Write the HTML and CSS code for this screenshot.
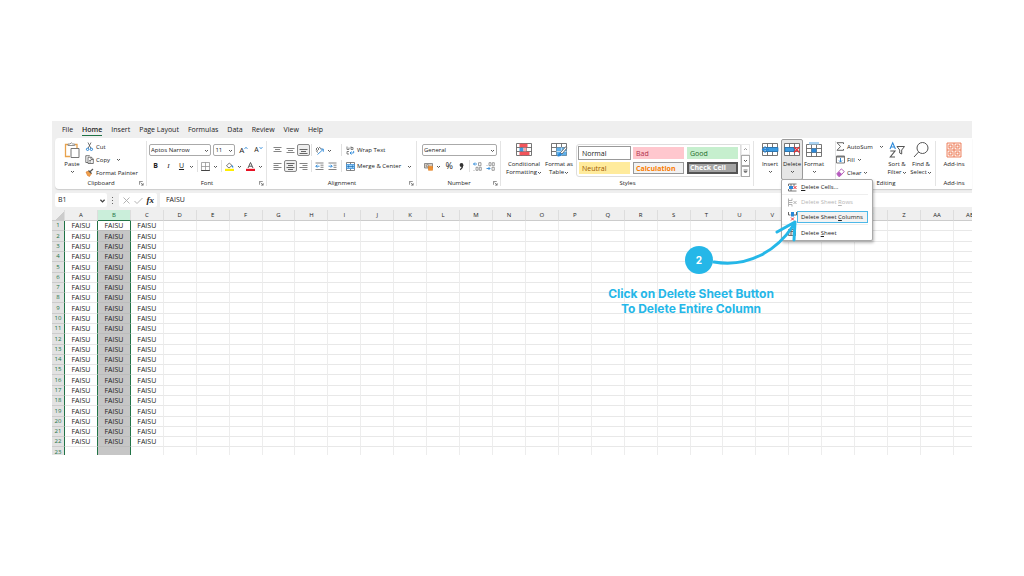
FILE: index.html
```html
<!DOCTYPE html>
<html lang="en">
<head>
<meta charset="utf-8">
<title>Delete sheet columns</title>
<link rel="stylesheet" href="styles.css">
</head>
<body>
<svg class="defs" aria-hidden="true">
  <symbol id="chev" viewBox="0 0 5 5"><path d="M1 2l1.500 1.500L4 2" fill="none" stroke="#444" stroke-width=".9"/></symbol>
  <symbol id="launch" viewBox="0 0 6 6"><path d="M.5 4.500V.5H4.500M2 2l3 3M5 2.500V5H2.500" fill="none" stroke="#555" stroke-width=".8"/></symbol>
  <symbol id="grid" viewBox="0 0 16 14"><path d="M.5.5h15v12H.5zM.5 4.500h15M.5 8.500h15M5.500.5v12M10.500.5v12" fill="#fff" stroke="#666" stroke-width=".9"/></symbol>
</svg>
<main class="app">
  <nav class="tabs">
    <button class="tab">File</button><button class="tab current">Home</button><button class="tab">Insert</button><button class="tab">Page Layout</button><button class="tab">Formulas</button><button class="tab">Data</button><button class="tab">Review</button><button class="tab">View</button><button class="tab">Help</button>
  </nav>

  <div class="ribbon">
    <section class="group">
      <div class="body clip">
        <button class="big"><svg class="i16" viewBox="0 0 16 16"><path d="M4 2.500H1.500v12H6M11 2.500h2V6" fill="none" stroke="#e8a24c" stroke-width="1.300"/><path d="M4 3.500V2h2Q7.200-.5 8.700 2h2v1.500z" fill="#fff" stroke="#777" stroke-width=".8"/><path d="M7 6.500h8v9H7z" fill="#fff" stroke="#777"/></svg><span>Paste</span><svg class="chev"><use href="#chev"/></svg></button>
        <div class="stack">
          <button class="line"><svg class="i9" viewBox="0 0 9 9"><path d="M3 .5l3 6M6 .5L3 6.500" fill="none" stroke="#555" stroke-width=".8"/><circle cx="2.600" cy="7.300" r="1.200" fill="none" stroke="#2b88d8"/><circle cx="6.400" cy="7.300" r="1.200" fill="none" stroke="#2b88d8"/></svg>Cut</button>
          <button class="line"><svg class="i9" viewBox="0 0 9 9"><path d="M3 7.500H.8V.7h4M3 2.200h3.500L8.300 4v4.500H3zM6 2.200V4.500h2.300M4.200 5.500h2M4.200 7h2" fill="none" stroke="#555" stroke-width=".8"/></svg>Copy<svg class="chev far"><use href="#chev"/></svg></button>
          <button class="line"><svg class="i9" viewBox="0 0 9 9"><path d="M1 4l3-1 2.500 2.500L4.500 8.500 2.500 7.500z" fill="#f1a04b" stroke="#d9772a" stroke-width=".6"/><path d="M3.500 2.500l3 3M5 3.800L8 1" fill="none" stroke="#555" stroke-width="1.200"/></svg>Format Painter</button>
        </div>
      </div>
      <div class="label">Clipboard<svg class="launch"><use href="#launch"/></svg></div>
    </section>

    <section class="group">
      <div class="body rows">
        <div class="row fontrow">
          <select class="combo wide" aria-label="Font"><option>Aptos Narrow</option></select>
          <select class="combo small" aria-label="Font size"><option>11</option></select>
          <button class="tool grow" aria-label="Increase font size">A<svg class="tiny" viewBox="0 0 4 4"><path d="M.5 3L2 1.200 3.500 3" fill="none" stroke="#2b88d8" stroke-width=".8"/></svg></button>
          <button class="tool shrink" aria-label="Decrease font size">A<svg class="tiny" viewBox="0 0 4 4"><path d="M.5 1L2 2.800 3.500 1" fill="none" stroke="#2b88d8" stroke-width=".8"/></svg></button>
        </div>
        <div class="row">
          <button class="tool bold">B</button><button class="tool ital">I</button><button class="tool under">U</button><svg class="chev"><use href="#chev"/></svg><i class="sep"></i>
          <button class="tool" aria-label="Borders"><svg class="i9" viewBox="0 0 9 9"><path d="M.5 .5h8v8h-8zM4.500.5v8M.5 4.500h8" fill="none" stroke="#888" stroke-width=".7"/><path d="M.2 8.500h8.600" stroke="#444"/></svg></button><svg class="chev"><use href="#chev"/></svg><i class="sep"></i>
          <button class="tool" aria-label="Fill color"><svg class="i9" viewBox="0 0 9 9"><path d="M1.500 3.800L4.300 1 7 3.500 4 6z" fill="#fff" stroke="#555" stroke-width=".8"/><path d="M7 3.500l1 2" stroke="#2b88d8" stroke-width="1.200"/><path d="M0 6.800h9V9H0z" fill="#ffee00"/></svg></button><svg class="chev"><use href="#chev"/></svg>
          <button class="tool" aria-label="Font color"><svg class="i9" viewBox="0 0 9 9"><path d="M2 6L4.500.5 7 6M3 4.200h3" fill="none" stroke="#444" stroke-width=".9"/><path d="M0 6.800h9V9H0z" fill="#e81123"/></svg></button><svg class="chev"><use href="#chev"/></svg>
        </div>
      </div>
      <div class="label">Font<svg class="launch"><use href="#launch"/></svg></div>
    </section>

    <section class="group">
      <div class="body rows align">
        <div class="row">
          <button class="tool" aria-label="Top align"><svg class="i9" viewBox="0 0 9 9"><path d="M.5 1.500h8M2 3.500h5M.5 5.500h8" stroke="#777" stroke-width=".9"/></svg></button>
          <button class="tool" aria-label="Middle align"><svg class="i9" viewBox="0 0 9 9"><path d="M.5 2.500h8M2 4.500h5M.5 6.500h8" stroke="#777" stroke-width=".9"/></svg></button>
          <button class="tool on" aria-label="Bottom align"><svg class="i9" viewBox="0 0 9 9"><path d="M.5 3.500h8M2 5.500h5M.5 7.500h8" stroke="#555" stroke-width=".9"/></svg></button>
          <i class="sep"></i>
          <button class="tool" aria-label="Orientation"><svg class="i9" viewBox="0 0 9 9"><path d="M2.500 8.500L8 3.500M5.500 3h2.800v2.800" fill="none" stroke="#2b88d8" stroke-width=".9"/><path d="M.8 4.500L3 6.500M1 3l1.500-1.500L4 3 2.500 4.500zM4 1l2.500 2" fill="none" stroke="#666" stroke-width=".9"/></svg></button><svg class="chev"><use href="#chev"/></svg>
          <i class="sep push"></i>
          <button class="line"><svg class="i9" viewBox="0 0 9 9"><path d="M1 .5v3h2v-2M5 .5v3h2v-2H5M1 5.500h2M1 8h2M1 5.500V8" fill="none" stroke="#666" stroke-width=".8"/><path d="M4 7h3.500q1-1.500-.5-2M5.500 5.500L4 7l1.500 1.500" fill="none" stroke="#2b88d8" stroke-width=".9"/></svg>Wrap Text</button>
        </div>
        <div class="row">
          <button class="tool" aria-label="Align left"><svg class="i9" viewBox="0 0 9 9"><path d="M.5 1.500h8M.5 3.500h5M.5 5.500h8M.5 7.500h5" stroke="#777" stroke-width=".9"/></svg></button>
          <button class="tool on" aria-label="Center"><svg class="i9" viewBox="0 0 9 9"><path d="M.5 1.500h8M2 3.500h5M.5 5.500h8M2 7.500h5" stroke="#555" stroke-width=".9"/></svg></button>
          <button class="tool" aria-label="Align right"><svg class="i9" viewBox="0 0 9 9"><path d="M.5 1.500h8M3.500 3.500h5M.5 5.500h8M3.500 7.500h5" stroke="#777" stroke-width=".9"/></svg></button>
          <i class="sep"></i>
          <button class="tool" aria-label="Decrease indent"><svg class="i9" viewBox="0 0 9 9"><path d="M.5 1h8M5.500 3.200h3M5.500 5.300h3M.5 7.500h8" stroke="#777" stroke-width=".9"/><path d="M4.500 4.200H.8M2.300 2.800L.8 4.200l1.500 1.500" fill="none" stroke="#2b88d8" stroke-width=".9"/></svg></button>
          <button class="tool" aria-label="Increase indent"><svg class="i9" viewBox="0 0 9 9"><path d="M.5 1h8M5.500 3.200h3M5.500 5.300h3M.5 7.500h8" stroke="#777" stroke-width=".9"/><path d="M.5 4.200h3.700M2.700 2.800l1.500 1.400-1.500 1.500" fill="none" stroke="#2b88d8" stroke-width=".9"/></svg></button>
          <i class="sep push"></i>
          <button class="line"><svg class="i9" viewBox="0 0 9 9"><path d="M.5.5h8v8h-8zM4.500.5v2M4.500 6.500v2" fill="#fff" stroke="#666" stroke-width=".8"/><path d="M.5 2.500h8v4h-8z" fill="#9fd0f5" stroke="#2b88d8" stroke-width=".7"/><path d="M1.500 4.500h6M3 3.500l-1.300 1L3 5.500M6 3.500l1.300 1L6 5.500" fill="none" stroke="#1168b0" stroke-width=".7"/></svg>Merge &amp; Center<svg class="chev"><use href="#chev"/></svg></button>
        </div>
      </div>
      <div class="label">Alignment<svg class="launch"><use href="#launch"/></svg></div>
    </section>

    <section class="group">
      <div class="body rows num">
        <div class="row"><select class="combo full" aria-label="Number format"><option>General</option></select></div>
        <div class="row">
          <button class="tool" aria-label="Accounting format"><svg class="i9" viewBox="0 0 9 9"><path d="M.5 1.500h8v4.500h-8z" fill="#d8cfc4" stroke="#777" stroke-width=".8"/><circle cx="3.500" cy="3.700" r="1.200" fill="none" stroke="#777" stroke-width=".7"/><path d="M4.500 4.300h4v4h-4zM4.500 5.700h4M4.500 7h4" fill="#f6a44b" stroke="#e07b1a" stroke-width=".6"/></svg></button><svg class="chev"><use href="#chev"/></svg>
          <button class="tool pct">%</button>
          <button class="tool" aria-label="Comma style"><svg class="i9" viewBox="0 0 9 9"><circle cx="4.500" cy="3" r="1.900" fill="#333"/><path d="M5.800 3q0 3-2.600 4.700" fill="none" stroke="#333" stroke-width="1.200"/></svg></button>
          <i class="sep"></i>
          <button class="tool" aria-label="Increase decimal"><svg class="i9" viewBox="0 0 9 9"><path d="M4 2H.5M2 .5L.5 2 2 3.500" fill="none" stroke="#2b88d8" stroke-width=".9"/><path d="M5.500.7H8v3H5.500zM3 5.300h2v3H3zM6.300 5.300H8.300v3h-2zM1 8v.8" fill="none" stroke="#777" stroke-width=".7"/></svg></button>
          <button class="tool" aria-label="Decrease decimal"><svg class="i9" viewBox="0 0 9 9"><path d="M.5 6.500H4M2.500 5L4 6.500 2.500 8" fill="none" stroke="#2b88d8" stroke-width=".9"/><path d="M3 .7H5v3H3zM6.300.7H8.300v3h-2zM6 5.300H8.300v3H6zM1 3v.8" fill="none" stroke="#777" stroke-width=".7"/></svg></button>
        </div>
      </div>
      <div class="label">Number<svg class="launch"><use href="#launch"/></svg></div>
    </section>

    <section class="group">
      <div class="body styles">
        <button class="big cf"><svg class="i16" viewBox="0 0 16 14"><use href="#grid"/><path d="M3.500 .8h8v3.500h-8zM3.500 8.700h10v3.500h-10z" fill="#f2545b"/><path d="M3.500 4.800h4v3.500h-4z" fill="#3c9be0"/><path d="M7.500 4.800h3v3.500h-3z" fill="#f7a5a8"/></svg><span>Conditional</span><span>Formatting <svg class="chev"><use href="#chev"/></svg></span></button>
        <button class="big ft"><svg class="i16" viewBox="0 0 16 14"><use href="#grid"/><path d="M5.500 4.500h10v8h-10z" fill="#5fb0ea"/><path d="M5.500 8.500h10M10.500 4.500v8" stroke="#d5eafa" stroke-width=".8"/><path d="M15 3.500L9.500 9.500 11 11l5-6z" fill="#fff" stroke="#555" stroke-width=".8"/><path d="M9.500 9.500q-2.500.5-3 4 3.500 .5 4.500-2z" fill="#2b88d8"/></svg><span>Format as</span><span>Table <svg class="chev"><use href="#chev"/></svg></span></button>
        <div class="gallery">
          <button class="st normal">Normal</button><button class="st bad">Bad</button><button class="st good">Good</button>
          <button class="st neutral">Neutral</button><button class="st calc">Calculation</button><button class="st check">Check Cell</button>
        </div>
        <div class="scroll">
          <button class="dim" aria-label="Up"><svg class="chev flip"><use href="#chev"/></svg></button><button aria-label="Down"><svg class="chev"><use href="#chev"/></svg></button><button aria-label="More"><svg class="chev" viewBox="0 0 5 5"><path d="M.5 1h4M1 2.500L2.500 4 4 2.500z" fill="none" stroke="#444" stroke-width=".7"/></svg></button>
        </div>
      </div>
      <div class="label">Styles</div>
    </section>

    <section class="group">
      <div class="body cells">
        <button class="big"><svg class="i16" viewBox="0 0 16 14"><use href="#grid"/><path d="M4 4.500h12v4H4z" fill="#3c9be0" stroke="#1a6fb5" stroke-width=".7"/><path d="M7 6.500H.8M3.500 3.500L.6 6.500l2.900 3" fill="none" stroke="#2b88d8" stroke-width="1.300"/></svg><span>Insert</span><svg class="chev"><use href="#chev"/></svg></button>
        <div class="drop">
          <button class="big pressed"><svg class="i16" viewBox="0 0 16 14"><use href="#grid"/><path d="M1 4.500h9v4H1z" fill="#3c9be0" stroke="#1a6fb5" stroke-width=".7"/><path d="M10 4l5.500 5.500M15.500 4L10 9.500" stroke="#e8303a" stroke-width="1.300"/></svg><span>Delete</span><svg class="chev"><use href="#chev"/></svg></button>
          <div class="menu">
            <button class="item"><svg class="i9" viewBox="0 0 9 9"><path d="M.5 1h8M.5 8h8M.5 1v2M3 1v2M6 1v2M.5 6v2M3 6v2" fill="none" stroke="#555" stroke-width=".8"/><path d="M1 3h4v3H1z" fill="#2b88d8"/><path d="M5.500 3l3 3M8.500 3l-3 3" stroke="#e8303a"/></svg><span><u>D</u>elete Cells...</span></button>
            <button class="item off" disabled><svg class="i9" viewBox="0 0 9 9"><path d="M.5.5v8M.5 2.500h3.500V.5M.5 4.500h4M.5 6.500h3.500v2M5.500 3l3 3M8.500 3l-3 3" fill="none" stroke="#aaa" stroke-width=".9"/></svg><span>Delete Sheet <u>R</u>ows</span></button>
            <button class="item hot"><svg class="i9" viewBox="0 0 9 9"><path d="M.5 0v3h2M6 3h2.500V0" fill="none" stroke="#555" stroke-width=".9"/><path d="M3 0h3v4.500H3z" fill="#2b88d8"/><path d="M3 5.500l3 3M6 5.500l-3 3" stroke="#e8303a"/></svg><span>Delete Sheet <u>C</u>olumns</span></button>
            <button class="item"><svg class="i9" viewBox="0 0 9 9"><path d="M.5 1.500h7v6h-7zM.5 3.500h7M3 1.500v6" fill="#ddd" stroke="#555" stroke-width=".8"/></svg><span>Delete <u>S</u>heet</span></button>
          </div>
        </div>
        <button class="big"><svg class="i16" viewBox="0 0 16 14"><use href="#grid" y="1"/><path d="M5.500 5.500h5v4h-5z" fill="#2b88d8"/><path d="M3-1h10v2.500H3z" fill="#a9d3f3"/></svg><span>Format</span><svg class="chev"><use href="#chev"/></svg></button>
      </div>
      <div class="label">Cells</div>
    </section>

    <section class="group">
      <div class="body edit">
        <div class="stack">
          <button class="line"><svg class="i9" viewBox="0 0 9 9"><path d="M7.500 2V.7H1L4.500 4.500 1 8.300h6.500V7" fill="none" stroke="#555" stroke-width=".9"/></svg>AutoSum<svg class="chev far"><use href="#chev"/></svg></button>
          <button class="line"><svg class="i9" viewBox="0 0 9 9"><path d="M.5 1h8v7h-8z" fill="#fff" stroke="#555" stroke-width=".8"/><path d="M.5 1h8v1.500h-8z" fill="#777"/><path d="M4.500 3v4M3 5.500L4.500 7 6 5.500" fill="none" stroke="#2b88d8"/></svg>Fill<svg class="chev"><use href="#chev"/></svg></button>
          <button class="line"><svg class="i9" viewBox="0 0 9 9"><path d="M.8 5.800L5.300.9l3 2.600L4 8.300H2.500z" fill="#fff" stroke="#a33ea1" stroke-width=".8"/><path d="M.8 5.800L3 3.500l3 2.600L4 8.300H2.500z" fill="#b65bc0"/></svg>Clear<svg class="chev"><use href="#chev"/></svg></button>
        </div>
        <button class="big"><svg class="i16" viewBox="0 0 16 16"><path d="M1 7L3.700.8 6.400 7M2 5h3.500" fill="none" stroke="#2b88d8" stroke-width="1.100"/><path d="M1.300 9H6L1.300 15H6" fill="none" stroke="#555" stroke-width="1.100"/><path d="M8 4.500h7.500L12.700 8v4l-2-1V8z" fill="none" stroke="#555"/></svg><span>Sort &amp;</span><span>Filter <svg class="chev"><use href="#chev"/></svg></span></button>
        <button class="big"><svg class="i16" viewBox="0 0 16 16"><circle cx="9.500" cy="6" r="5.500" fill="none" stroke="#555"/><path d="M5.600 10L1 15" stroke="#555"/></svg><span>Find &amp;</span><span>Select <svg class="chev"><use href="#chev"/></svg></span></button>
      </div>
      <div class="label">Editing</div>
    </section>

    <section class="group last">
      <div class="body center">
        <button class="big"><svg class="i16" viewBox="0 0 16 16"><path d="M1 1h14v14H1zM1 8h14M8 1v14M3 3h3v3H3zM10 3h3v3h-3zM3 10h3v3H3zM10 10h3v3h-3z" fill="#fdeee8" stroke="#e8683f" stroke-width=".8"/></svg><span>Add-ins</span></button>
      </div>
      <div class="label">Add-ins</div>
    </section>
  </div>

  <div class="fbar">
    <select class="namebox" aria-label="Name box"><option>B1</option></select>
    <svg class="dots" viewBox="0 0 3 9"><path d="M1 1h1v1H1zM1 4h1v1H1zM1 7h1v1H1z" fill="#666"/></svg>
    <div class="fx">
      <svg class="i9" viewBox="0 0 9 9"><path d="M1.500 1.500l6 6M7.500 1.500l-6 6" stroke="#aaa" stroke-width=".9"/></svg>
      <svg class="i9" viewBox="0 0 9 9"><path d="M.5 5L3 7.500 8.500 2" fill="none" stroke="#aaa" stroke-width=".9"/></svg>
      <button class="fn">fx</button>
    </div>
    <input class="formula" aria-label="Formula" value="FAISU">
  </div>

  <div class="sheetwrap"><table class="sheet" id="sheet"></table></div>

  <svg class="arrow" viewBox="0 0 90 50"><path d="M5 42C40 48 68 30 84 6M68 12L86 2 85 20" fill="none" stroke="#25b7e8" stroke-width="3" stroke-linecap="round" stroke-linejoin="round"/></svg>
  <div class="step">2</div>
  <p class="note">Click on Delete Sheet Button<br>To Delete Entire Column</p>
</main>
<script src="script.js"></script>
</body>
</html>
```
FILE: styles.css
```css
* { box-sizing: border-box; }
body { margin: 0; padding: 121px 52px; background: #fff; font: 6px/8px "Open Sans", "Noto Sans", sans-serif; color: #222; }
button, select, input { font: inherit; color: inherit; margin: 0; padding: 0; border: 0; background: none; border-radius: 0; }
svg { flex: none; display: block; overflow: visible; }
.defs { position: absolute; width: 0; height: 0; }
.i9 { width: 9px; height: 9px; }
.i16 { width: 16px; height: 16px; }
.chev { width: 5px; height: 5px; display: inline-block; }
.flip { transform: rotate(180deg); }

.app { position: relative; background: #efefef; }
.tabs { display: flex; gap: 9px; height: 17px; padding: 2px 10px 0; font-size: 7px; }
.tab { line-height: 13px; height: 13px; white-space: nowrap; }
.tab.current { font-weight: 600; border-bottom: 1px solid #217346; }

.ribbon { display: grid; grid-template-columns: 92fr 120fr 150fr 84fr 253fr 82fr 100fr 36fr; margin-left: 3px; background: #fff; border-radius: 4px 0 0 4px; box-shadow: 0 1px 1px #ccc; }
.group { display: flex; flex-direction: column; min-width: 0; padding: 2px 0 1px; position: relative; }
.group:not(.last)::after { content: ""; position: absolute; right: 0; top: 3px; bottom: 3px; width: 1px; background: #e4e4e4; }
.body { display: flex; height: 39px; }
.label { display: flex; justify-content: center; line-height: 9px; position: relative; }
.launch { position: absolute; right: 3px; top: 2px; width: 5px; height: 5px; }

.big { display: flex; flex-direction: column; align-items: center; padding-top: 2px; white-space: nowrap; }
.big .i16 { margin-bottom: 2px; }
.big > span { display: flex; align-items: center; }
.big > .chev { margin-top: 1px; }
.stack { display: grid; grid-auto-rows: 13px; }
.line { display: flex; align-items: center; gap: 2px; white-space: nowrap; }
.far { margin-left: 4px; }
.clip { padding-left: 9px; gap: 5px; }

.rows { flex-direction: column; gap: 4px; padding: 4px 2px 0; }
.row { display: flex; align-items: center; height: 12px; }
.tool { width: 13px; height: 12px; display: flex; align-items: center; justify-content: center; }
.tool.on { border: 1px solid #888; border-radius: 2px; background: #eee; }
.sep { width: 1px; height: 12px; margin: 0 1px; background: #e0e0e0; }
.rows > .row > .chev { margin: 0 2px 0 1px; }
.combo, .namebox { appearance: none; background: #fff url("data:image/svg+xml,%3Csvg xmlns='http://www.w3.org/2000/svg' viewBox='0 0 5 5'%3E%3Cpath d='M1 2l1.500 1.500L4 2' fill='none' stroke='%23444' stroke-width='.9'/%3E%3C/svg%3E") right 1px center / 5px 5px no-repeat; }
.combo { height: 12px; border: 1px solid #aaa; border-radius: 2px; padding: 0 1px; }
.wide { width: 63px; }
.small { width: 22px; }
.full { width: 100%; }
.fontrow { gap: 2px; }
.grow, .shrink { font-size: 8px; }
.shrink { font-size: 7px; }
.tiny { width: 4px; height: 4px; margin-bottom: 4px; }
.bold { font-weight: 700; font-size: 7px; }
.ital { font: italic 7px "Liberation Serif", serif; }
.under { text-decoration: underline; font-size: 7px; }
.align { padding-left: 4px; }
.push { margin: 0 4px 0 auto; }
.align .line { width: 69px; }
.align .line .chev { margin-left: 4px; }
.num { padding: 4px 4px 0 5px; }
.pct { font-size: 9px; }

.styles { padding-left: 5px; }
.cf { width: 36px; }
.ft { width: 34px; }
.gallery { flex: 1; display: grid; grid-template-columns: repeat(3, 1fr); grid-auto-rows: 12px; gap: 3px; padding: 2px; margin: 4px 0 2px; border: 1px solid #ddd; border-radius: 3px 0 0 3px; }
.st { text-align: left; padding-left: 3px; font-size: 7px; line-height: 11px; }
.normal { outline: 1px solid #999; background: #fff; }
.bad { background: #ffc7ce; color: #b0304a; }
.good { background: #c6efce; color: #1f6b2c; }
.neutral { background: #ffeb9c; color: #9c5700; }
.calc { background: #f2f2f2; color: #fa7d00; font-weight: 700; border: 1px solid #999; padding-left: 2px; line-height: 9px; }
.check { background: #a5a5a5; color: #fff; font-weight: 700; border: 2px solid #555; padding-left: 1px; line-height: 8px; }
.scroll { width: 9px; margin: 4px 4px 2px 0; display: grid; grid-template-rows: repeat(3, 1fr); }
.scroll button { border: 1px solid #aaa; display: flex; align-items: center; justify-content: center; }
.scroll .dim { border-color: #ddd; opacity: .6; }

.cells { padding-left: 5px; }
.cells .big { width: 22px; height: 40px; }
.pressed { border: 1px solid #999; border-radius: 2px; background: #e6e6e6; }
.cells .drop .pressed { height: 41px; }
.drop { position: relative; margin-top: -1px; }
.menu { position: absolute; z-index: 2; left: 0; top: 40px; width: 92px; padding: 0 4px 0 0; background: #fff; border: 1px solid #aaa; border-radius: 2px; box-shadow: 1px 2px 3px #0004; }
.item { display: flex; align-items: center; width: 100%; height: 15px; padding-left: 6px; white-space: nowrap; }
.item:first-child { height: 14px; }
.item span { flex: 1; text-align: left; padding-left: 4px; line-height: 12px; }
.item.off { color: #b5b5b5; border-top: 1px solid #eee; }
.item.hot span { border: 1px solid #4db8e8; background: #f3f3f3; padding-left: 3px; line-height: 10px; }
.item:last-child { border-top: 1px solid #eee; height: 16px; }
.edit .stack { width: 49px; }
.edit .big { width: 24px; }
.center { justify-content: center; }

.fbar { display: flex; gap: 3px; padding: 4px 0 3px 3px; height: 21px; font-size: 7px; }
.namebox { width: 52px; padding: 0 3px; border-radius: 2px; background-size: 7px 7px; }
.dots { width: 3px; height: 9px; align-self: center; margin: 0 2px 0 1px; }
.fx { display: flex; align-items: center; justify-content: space-between; width: 38px; padding: 0 3px; background: #fff; border-radius: 2px; }
.fn { font: italic 700 9px "Liberation Serif", serif; }
.formula { flex: 1; min-width: 0; background: #fff; padding-left: 6px; }

.sheetwrap { overflow: hidden; height: 245px; background: #fff; }
.sheet { width: calc(100% + 15px); table-layout: fixed; border-collapse: separate; border-spacing: 0; }
.sheet th, .sheet td { padding: 0; height: 10px; line-height: 9px; text-align: center; font-weight: 400; overflow: hidden; border-right: 1px solid #ededed; border-bottom: 1px solid #e8e8e8; }
.sheet td { font-size: 7px; }
.sheet tbody tr:nth-child(7n+2) td, .sheet tbody tr:nth-child(7n+5) td { height: 11px; }
.sheet thead th { background: #efefef; border-bottom-color: #ccc; border-right-color: #ddd; height: 11px; }
.sheet .corner { width: 13px; background: linear-gradient(135deg, #efefef 60%, #ccc 60%); }
.sheet thead .picked { background: #caeeda; color: #217346; border-bottom: 1px solid #217346; }
.sheet tbody th { background: #e2e2e2; color: #217346; border-right: 1px solid #217346; border-bottom-color: #ccc; }
.sheet td.sel { background: #c6c6c6; border-right: 1px solid #217346; border-bottom-color: #bcbcbc; }
.sheet td.before { border-right: 1px solid #217346; }
.sheet tr:first-child td.sel { background: #fff; }

.step { position: absolute; left: 633px; top: 125px; width: 28px; height: 28px; border-radius: 50%; background: #25b7e8; color: #fff; font: 700 10px/28px Inter, sans-serif; text-align: center; }
.arrow { position: absolute; z-index: 3; left: 657px; top: 99px; width: 90px; height: 50px; }
.note { position: absolute; left: 539px; top: 165px; width: 200px; margin: 0; text-align: center; color: #25b7e8; font: 700 12px/15px Inter, sans-serif; }
```
FILE: script.js
```js
const sheet = document.getElementById('sheet');
const names = [...'ABCDEFGHIJKLMNOPQRSTUVWXYZ', 'AA', 'AB'];
const head = sheet.createTHead().insertRow();
head.innerHTML = '<th class="corner"></th>' +
  names.map(n => `<th scope="col"${n === 'B' ? ' class="picked"' : ''}>${n}</th>`).join('');
const body = sheet.createTBody();
for (let r = 1; r <= 23; r++) {
  body.insertRow().innerHTML = `<th scope="row">${r}</th>` + names.map((n, c) => {
    const kind = c === 0 ? ' class="before"' : c === 1 ? ' class="sel"' : '';
    return `<td${kind}>${c < 3 && r < 23 ? 'FAISU' : ''}</td>`;
  }).join('');
}
```
